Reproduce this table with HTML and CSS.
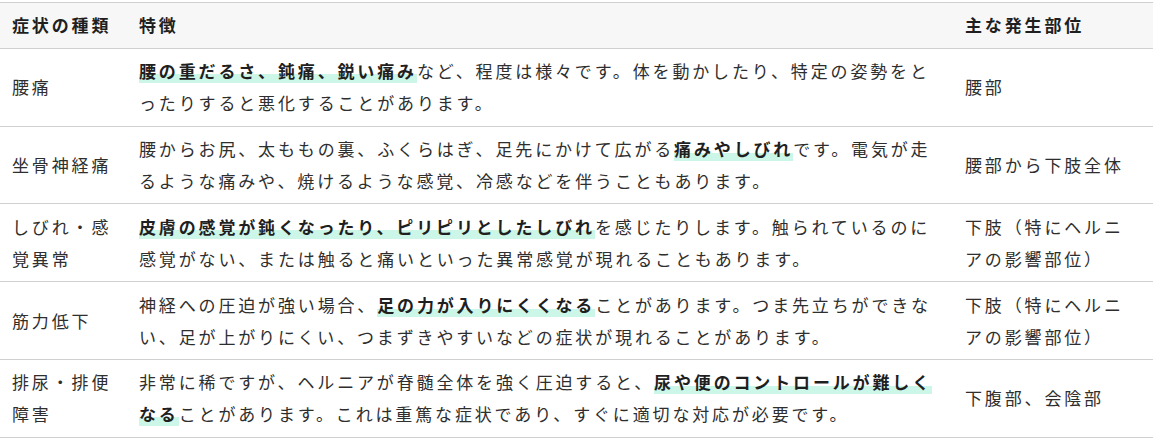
FILE: index.html
```html
<!DOCTYPE html>
<html lang="ja">
<head>
<meta charset="utf-8">
<link rel="stylesheet" href="styles.css">
</head>
<body>
<table class="symptoms">
  <colgroup>
    <col class="c-type">
    <col class="c-desc">
    <col class="c-part">
  </colgroup>
  <thead>
    <tr><th>症状の種類</th><th>特徴</th><th>主な発生部位</th></tr>
  </thead>
  <tbody>
    <tr>
      <td>腰痛</td>
      <td><strong class="mark">腰の重だるさ、鈍痛、鋭い痛み</strong>など、程度は様々です。体を動かしたり、特定の姿勢をとったりすると悪化することがあります。</td>
      <td>腰部</td>
    </tr>
    <tr>
      <td>坐骨神経痛</td>
      <td>腰からお尻、太ももの裏、ふくらはぎ、足先にかけて広がる<strong class="mark">痛みやしびれ</strong>です。電気が走るような痛みや、焼けるような感覚、冷感などを伴うこともあります。</td>
      <td>腰部から下肢全体</td>
    </tr>
    <tr>
      <td>しびれ・感覚異常</td>
      <td><strong class="mark">皮膚の感覚が鈍くなったり、ピリピリとしたしびれ</strong>を感じたりします。触られているのに感覚がない、または触ると痛いといった異常感覚が現れることもあります。</td>
      <td>下肢（特にヘルニアの影響部位）</td>
    </tr>
    <tr>
      <td>筋力低下</td>
      <td>神経への圧迫が強い場合、<strong class="mark">足の力が入りにくくなる</strong>ことがあります。つま先立ちができない、足が上がりにくい、つまずきやすいなどの症状が現れることがあります。</td>
      <td>下肢（特にヘルニアの影響部位）</td>
    </tr>
    <tr>
      <td>排尿・排便障害</td>
      <td>非常に稀ですが、ヘルニアが脊髄全体を強く圧迫すると、<strong class="mark">尿や便のコントロールが難しくなる</strong>ことがあります。これは重篤な症状であり、すぐに適切な対応が必要です。</td>
      <td>下腹部、会陰部</td>
    </tr>
  </tbody>
</table>
</body>
</html>
```

FILE: styles.css
```css
html, body {
  margin: 0;
  padding: 0;
  background: #fff;
}

body {
  padding-top: 2px;
  font-family: "Noto Sans CJK JP", "Noto Sans", sans-serif;
  font-size: 17px;
  color: #2e2e2e;
}

.symptoms {
  width: 100%;
  border-collapse: collapse;
  table-layout: fixed;
  line-height: 32px;
  letter-spacing: 2.85px;
}

.c-type { width: 127px; }
.c-part { width: 200px; }

.symptoms th,
.symptoms td {
  padding: 6.4px 12px;
  border-top: 1px solid #d0d0d0;
  border-bottom: 1px solid #d0d0d0;
  text-align: left;
  vertical-align: middle;
}

.symptoms th {
  background: #f7f7f7;
  font-weight: 700;
  color: #1f1f1f;
}

.mark {
  font-weight: 700;
  color: #1f1f1f;
  background: linear-gradient(transparent 66%, #ccf6e7 66%);
}
```
